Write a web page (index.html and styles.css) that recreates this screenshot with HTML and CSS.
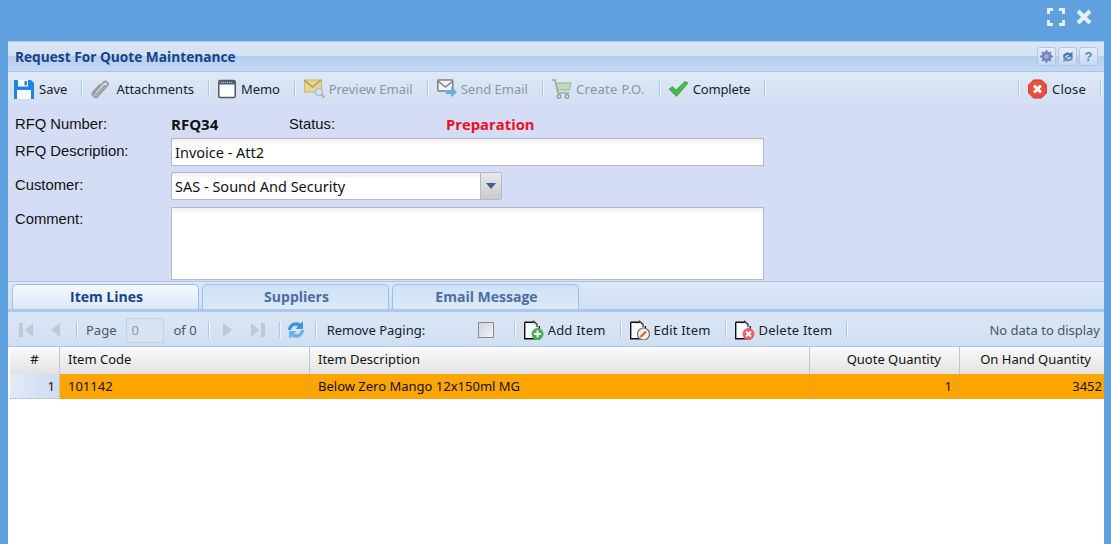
FILE: index.html
```html
<!DOCTYPE html>
<html lang="en">
<head>
  <meta charset="UTF-8" />
  <title>Request For Quote Maintenance</title>
  <link rel="stylesheet" href="styles.css">
</head>
<body>
  <!-- top bar -->
  <div class="topbar">
    <svg class="top-icon" width="18" height="18" viewBox="0 0 18 18"><path d="M1.500 6V1.500H6M12 1.500h4.500V6M16.500 12v4.500H12M6 16.500H1.500V12" fill="none" stroke="#e6f0fa" stroke-width="3"/></svg>
    <svg class="top-icon" width="16" height="16" viewBox="0 0 16 16"><path d="M2 2l12 12M14 2L2 14" fill="none" stroke="#e6f0fa" stroke-width="4"/></svg>
  </div>

  <div class="window">
    <div class="titlebar">
      <span class="title">Request For Quote Maintenance</span>
      <div class="tools">
        <div class="tool"><svg width="15" height="15" viewBox="0 0 15 15"><circle cx="7.500" cy="7.500" r="5" fill="#7686bd"/><circle cx="7.500" cy="7.500" r="2.200" fill="#9fb0dc"/><path d="M7.500 1v13M1 7.500h13M3 3l9 9M12 3l-9 9" stroke="#7686bd" stroke-width="1.800" stroke-dasharray="2.500 8 2.500"/></svg></div>
        <div class="tool"><svg width="14" height="14" viewBox="0 0 14 14"><path d="M2 7C2 3.500 6 1.500 9.500 3.200L11.500 1.500V7H6L8 5.200C6 4.500 4.500 5.200 4 7z" fill="#4d78ad"/><path d="M12 7c0 3.500-4 5.500-7.500 3.800L2.500 12.500V7H8L6 8.800C8 9.500 9.500 8.800 10 7z" fill="#6b90bf"/></svg></div>
        <div class="tool tool-help">?</div>
      </div>
    </div>

    <div class="toolbar">
      <div class="btn">
        <svg width="20" height="20" viewBox="0 0 20 20"><path d="M0 1h17l3 3v16H0z" fill="#1c86e0"/><rect x="4" y="1" width="10" height="6.500" fill="#fff"/><rect x="10.500" y="2" width="2.500" height="4.500" fill="#1c86e0"/><rect x="3" y="11" width="14" height="9" fill="#fff"/></svg>
        <span>Save</span>
      </div>
      <i class="sep"></i>
      <div class="btn gap-wide">
        <svg width="18" height="20" viewBox="0 0 18 20"><path d="M14.500 6L6 15c-1.500 1.500-3.500-.5-2-2.200l8.500-9.300c2.500-2.500 6 .8 3.500 3.500L7 17c-3 3-7.500-1-4.500-4.500L9 5.500" fill="none" stroke="#9a9a9a" stroke-width="1.800"/></svg>
        <span>Attachments</span>
      </div>
      <i class="sep"></i>
      <div class="btn">
        <svg width="18" height="20" viewBox="0 0 18 20"><rect x=".8" y="1.500" width="16.400" height="17" rx="1.500" fill="#fff" stroke="#55585e" stroke-width="1.500"/><rect x="1" y="2" width="16" height="3.500" fill="#4f6484"/><path d="M3 3.500h12" stroke="#b7c4d8" stroke-dasharray="1 1"/></svg>
        <span class="narrow">Memo</span>
      </div>
      <i class="sep"></i>
      <div class="btn off gap-tight">
        <svg width="22" height="20" viewBox="0 0 22 20"><rect x=".5" y="1" width="17" height="12" fill="#e8d68a" stroke="#c9b870"/><path d="M0 1l8.500 7L17 1" fill="none" stroke="#a89c70" stroke-width="1.500"/><circle cx="15" cy="13" r="3.500" fill="#d5e3f2" stroke="#a9bdd3" stroke-width="1.500"/><path d="M17.500 15.500l3 3" stroke="#c9a78c" stroke-width="2"/></svg>
        <span>Preview Email</span>
      </div>
      <i class="sep"></i>
      <div class="btn off gap-mid">
        <svg width="20" height="20" viewBox="0 0 20 20"><rect x=".8" y="1" width="15" height="11" rx="1" fill="#f1f4f8" stroke="#7c8085" stroke-width="1.500"/><path d="M1 2l7.500 6L16 2" fill="none" stroke="#7c8085" stroke-width="1.500"/><path d="M9 11h5V7.500l6 5.500-6 5.500V15H9z" fill="#6aaee8"/></svg>
        <span>Send Email</span>
      </div>
      <i class="sep"></i>
      <div class="btn off gap-mid">
        <svg width="20" height="20" viewBox="0 0 20 20"><path d="M0 1h3l3 13h11" fill="none" stroke="#9aa79a" stroke-width="1.500"/><path d="M4 4h15l-2 7H6z" fill="#bfdcc0" stroke="#8db890"/><circle cx="7" cy="17.500" r="1.800" fill="none" stroke="#8a968a" stroke-width="1.200"/><circle cx="15" cy="17.500" r="1.800" fill="none" stroke="#8a968a" stroke-width="1.200"/></svg>
        <span class="wider-more">Create P.O.</span>
      </div>
      <i class="sep"></i>
      <div class="btn">
        <svg width="19" height="20" viewBox="0 0 19 20"><path d="M0 10l3.500-2.500L7 11 16 2.500 19 4 7.500 17.500z" fill="#4cb84a" stroke="#3b9a3d" stroke-width=".8"/></svg>
        <span class="narrow">Complete</span>
      </div>
      <i class="sep"></i>
      <div class="spacer"></div>
      <i class="sep"></i>
      <div class="btn">
        <svg width="19" height="20" viewBox="0 0 19 20"><path d="M5.500 1h8L19 6.500v7L13.500 19h-8L0 13.500v-7z" fill="#e8503c" stroke="#c63a2a"/><path d="M6 6.500l7 7M13 6.500l-7 7" stroke="#fff" stroke-width="3"/></svg>
        <span class="wider">Close</span>
      </div>
      <i class="sep sep-end"></i>
    </div>

    <!-- form -->
    <div class="form">
      <div class="form-row row-head">
        <label>RFQ Number:</label>
        <div class="head-values">
          <b class="rfq-no">RFQ34</b>
          <span class="status-label">Status:</span>
          <b class="status">Preparation</b>
        </div>
      </div>
      <div class="form-row row-desc">
        <label>RFQ Description:</label>
        <div class="input input-wide">Invoice - Att2</div>
      </div>
      <div class="form-row">
        <label>Customer:</label>
        <div class="input input-combo">
          <span class="combo-text">SAS - Sound And Security</span>
          <div class="combo-arrow"><svg width="10" height="6" viewBox="0 0 10 6"><path d="M0 0h10L5 6z" fill="#41608f"/></svg></div>
        </div>
      </div>
      <div class="form-row">
        <label>Comment:</label>
        <div class="input input-wide input-memo"></div>
      </div>
    </div>

    <!-- tabs -->
    <div class="tabs">
      <div class="tab active">Item Lines</div>
      <div class="tab">Suppliers</div>
      <div class="tab">Email Message</div>
    </div>

    <div class="pager">
      <svg class="pg-first" width="14" height="16" viewBox="0 0 14 16"><rect x="0" y="1" width="4" height="14" fill="#bfc8d3"/><path d="M14 1v14L6 8z" fill="#bfc8d3"/></svg>
      <svg class="pg-prev" width="10" height="16" viewBox="0 0 10 16"><path d="M10 1v14L1 8z" fill="#bfc8d3"/></svg>
      <i class="sep sep-prev"></i>
      <span class="pg-text">Page</span>
      <div class="pg-input">0</div>
      <span class="pg-text">of 0</span>
      <i class="sep sep-of"></i>
      <svg class="pg-next" width="10" height="16" viewBox="0 0 10 16"><path d="M0 1v14l9-7z" fill="#bfc8d3"/></svg>
      <svg class="pg-last" width="14" height="16" viewBox="0 0 14 16"><rect x="10" y="1" width="4" height="14" fill="#bfc8d3"/><path d="M0 1v14l8-7z" fill="#bfc8d3"/></svg>
      <i class="sep"></i>
      <svg class="pg-refresh" width="18" height="20" viewBox="0 0 18 20"><path d="M1 10C1 4 8 0 13.500 3.500L16 1.500V9H8.500l2.500-2.500C8 4.500 4.500 6.500 4 10z" fill="#3e93dd"/><path d="M17 10c0 6-7 10-12.500 6.500L2 18.500V11h7.500L7 13.500c3 2 6.500 0 7-3.500z" fill="#6cb2ea"/></svg>
      <i class="sep sep-near"></i>
      <span class="remove-label">Remove Paging:</span>
      <div class="checkbox"></div>
      <i class="sep sep-far"></i>
      <div class="btn gap-mid">
        <svg width="20" height="20" viewBox="0 0 20 20"><path d="M.7 2.200h9M15.300 6v12.800H.7V2.200" fill="#fff" stroke="#111" stroke-width="1.400"/><path d="M9 .8l4 3.500v3" fill="none" stroke="#333" stroke-width="1.300"/><circle cx="13.500" cy="14" r="6" fill="#4cae56"/><path d="M13.500 10.500v7M10 14h7" stroke="#fff" stroke-width="2"/></svg>
        <span class="wider">Add Item</span>
      </div>
      <i class="sep"></i>
      <div class="btn gap-mid">
        <svg width="20" height="20" viewBox="0 0 20 20"><path d="M.7 2.200h9M15.300 6v12.800H.7V2.200" fill="#fff" stroke="#111" stroke-width="1.400"/><path d="M9 .8l4 3.500v3" fill="none" stroke="#333" stroke-width="1.300"/><circle cx="13.500" cy="14" r="6" fill="#f4f1ee" stroke="#77706a" stroke-width="1.200"/><path d="M10.500 17l5.500-5.500" stroke="#d9622b" stroke-width="2.200"/></svg>
        <span class="wider">Edit Item</span>
      </div>
      <i class="sep"></i>
      <div class="btn gap-mid">
        <svg width="20" height="20" viewBox="0 0 20 20"><path d="M.7 2.200h9M15.300 6v12.800H.7V2.200" fill="#fff" stroke="#111" stroke-width="1.400"/><path d="M9 .8l4 3.500v3" fill="none" stroke="#333" stroke-width="1.300"/><circle cx="13.500" cy="14" r="6" fill="#e8606a"/><path d="M11 11.500l5 5M16 11.500l-5 5" stroke="#fff" stroke-width="1.800"/></svg>
        <span class="wider">Delete Item</span>
      </div>
      <i class="sep"></i>
      <div class="spacer"></div>
      <span class="no-data">No data to display</span>
    </div>

    <!-- grid -->
    <div class="grid">
      <div class="head head-num">#</div>
      <div class="head">Item Code</div>
      <div class="head">Item Description</div>
      <div class="head head-right">Quote Quantity</div>
      <div class="head head-right last">On Hand Quantity</div>
      <div class="cell cell-num">1</div>
      <div class="cell">101142</div>
      <div class="cell">Below Zero Mango 12x150ml MG</div>
      <div class="cell cell-right">1</div>
      <div class="cell cell-right last">3452</div>
    </div>
  </div>
</body>
</html>
```

FILE: styles.css
```css
/* general */
html, body {
  height: 100%;
}
body {
  margin: 0;
  background: #5fa0de;
  font-family: "Noto Sans", sans-serif;
  font-size: 13px;
  color: #15212e;
  overflow: hidden;
  display: flex;
  flex-direction: column;
}
.topbar {
  height: 41px;
  flex: none;
  display: flex;
  justify-content: flex-end;
  align-items: center;
  gap: 11px;
  padding: 0 19px 7px 0;
  box-sizing: border-box;
}
.window {
  flex: 1;
  margin: 0 7px 0 8px;
  background: #fff;
  border-top: 1px solid #a9c8ee;
  display: flex;
  flex-direction: column;
  min-height: 0;
}

/* title */
.titlebar {
  height: 30px;
  flex: none;
  box-sizing: border-box;
  border-bottom: 1px solid #a6c4ec;
  background: linear-gradient(#d9e6f5 0, #d3e1f3 48%, #b5cfef 50%, #c4d8f2 100%);
  display: flex;
  align-items: center;
  padding: 0 6px 0 7px;
}
.title {
  font: bold 13.700px "Open Sans", sans-serif;
  color: #15428b;
  flex: 1;
}
.tools {
  display: flex;
  gap: 2px;
}
.tool {
  width: 17px;
  height: 17px;
  border: 1px solid #a9c8ee;
  border-radius: 3px;
  background: linear-gradient(#e6eff9, #c5d8f0);
  display: flex;
  align-items: center;
  justify-content: center;
}
.tool-help {
  font: bold 13px "Liberation Sans", sans-serif;
  color: #5d83b5;
}

/* toolbars */
.toolbar {
  height: 34px;
  flex: none;
  background: linear-gradient(#dfe9f6, #d6e2f3 60%, #d5ddf6);
  display: flex;
  align-items: center;
  padding-left: 6px;
  color: #15212e;
}
.btn {
  display: flex;
  align-items: center;
  gap: 5px;
  white-space: nowrap;
}
.gap-wide {
  gap: 7px;
}
.gap-mid {
  gap: 4px;
}
.gap-tight {
  gap: 3px;
}
.narrow {
  letter-spacing: -.15px;
}
.wider {
  letter-spacing: .2px;
}
.wider-more {
  letter-spacing: .3px;
}
.off {
  color: #8c95a0;
}
.sep {
  width: 1px;
  height: 16px;
  background: #a9c8ee;
  border-right: 1px solid #f0f6fd;
  margin: 0 8px 0 14px;
  flex: none;
}
.sep-end {
  margin-right: 2px;
}
.sep-near {
  margin-left: 10px;
}
.sep-far {
  margin-left: 20px;
}
.sep-of {
  margin-left: 11px;
}
.spacer {
  flex: 1;
}

/* form */
.form {
  height: 175px;
  flex: none;
  box-sizing: border-box;
  background: #d5ddf6;
  padding: 10px 0 0 7px;
  display: flex;
  flex-direction: column;
  gap: 7px;
}
.form-row {
  display: flex;
  font-family: "Liberation Sans", sans-serif;
  font-size: 14.800px;
}
.form-row label {
  width: 156px;
  flex: none;
  padding-top: 5px;
  line-height: 16px;
  color: #111;
}
.form-row:last-child label {
  padding-top: 4px;
}
.row-head {
  height: 16px;
  margin-bottom: -1px;
}
.row-head label {
  padding-top: 0;
}
.row-desc {
  margin-bottom: -1px;
}
.head-values {
  display: flex;
  line-height: 18px;
}
.rfq-no {
  width: 118px;
  font: bold 15px/17px "Open Sans", sans-serif;
  color: #111;
}
.status-label {
  width: 157px;
  line-height: 16px;
  color: #111;
}
.status {
  font: bold 14.800px/17px "Open Sans", sans-serif;
  color: #f00f1e;
}
.input {
  height: 28px;
  box-sizing: border-box;
  border: 1px solid #b4b9c6;
  background: linear-gradient(#f0f0f0, #fff 6px);
  padding-left: 3px;
  line-height: 26px;
  font-family: "Noto Sans", sans-serif;
  font-size: 14.500px;
  color: #111;
}
.input-wide {
  width: 593px;
}
.input-combo {
  width: 331px;
  display: flex;
  border-radius: 2px;
}
.combo-text {
  flex: 1;
}
.combo-arrow {
  width: 20px;
  background: linear-gradient(#e8e9ec, #c9cbd0);
  border-left: 1px solid #b4b9c6;
  display: flex;
  align-items: center;
  justify-content: center;
}
.input-memo {
  height: 73px;
}

/* tabs */
.tabs {
  height: 28px;
  flex: none;
  box-sizing: border-box;
  background: linear-gradient(#dde8f6, #cfdff2);
  border-top: 1px solid #a9c8ee;
  padding: 2px 0 0 4px;
  display: flex;
  gap: 3px;
}
.tab {
  width: 187px;
  box-sizing: border-box;
  border: 1px solid #9fc0ea;
  border-bottom: 0;
  border-radius: 5px 5px 0 0;
  background: linear-gradient(#cfe2f8, #dbe9fa);
  text-align: center;
  padding-left: 2px;
  font: bold 14px/24px "Open Sans", sans-serif;
  color: #4c6d9f;
}
.tab.active {
  background: linear-gradient(#f4f8fd, #dbe8f9);
  color: #15428b;
  height: 26px;
}

/* pager */
.pager {
  height: 38px;
  flex: none;
  box-sizing: border-box;
  border-top: 3px solid #a9c8ee;
  border-bottom: 1px solid #a9c8ee;
  background: linear-gradient(#dbe6f5, #d0e0f1);
  display: flex;
  align-items: center;
  padding: 2px 4px 0 11px;
  color: #15212e;
}
.pg-prev {
  margin-left: 17px;
}
.sep-prev {
  margin-left: 16px;
}
.pg-text {
  color: #4a5663;
}
.pg-input {
  width: 38px;
  height: 25px;
  box-sizing: border-box;
  margin: 0 10px 0 9px;
  border: 1px solid #c3d2e4;
  background: #d8e3f1;
  color: #8d98a6;
  padding-left: 5px;
  line-height: 23px;
}
.pg-next {
  margin-left: 5px;
}
.pg-last {
  margin-left: 18px;
}
.pg-refresh {
  margin-left: -2px;
}
.remove-label {
  width: 151px;
  margin-left: 2px;
}
.checkbox {
  width: 16px;
  height: 16px;
  box-sizing: border-box;
  border: 1px solid #8a8a8a;
  background: linear-gradient(135deg, #d0d3d8, #f4f5f7);
}
.no-data {
  color: #4a5663;
}

/* grid */
.grid {
  display: grid;
  grid-template-columns: 50px 250px 500px 150px 1fr;
  grid-template-rows: 27px 25px;
  padding-left: 2px;
  color: #111;
}
.head {
  box-sizing: border-box;
  background: linear-gradient(#fbfbfb, #e2e2e2);
  border-right: 1px solid #c5c5c5;
  padding-left: 8px;
  line-height: 24px;
}
.head-num {
  text-align: center;
  padding: 0;
}
.head-right {
  text-align: right;
  padding: 0 18px 0 0;
}
.head-right.last {
  padding-right: 13px;
}
.cell {
  box-sizing: border-box;
  background: #ffa500;
  padding-left: 8px;
  line-height: 25px;
  border-right: 1px dotted #c9a34e;
}
.cell-num {
  background: linear-gradient(90deg, #e2ebf7, #cddcf1);
  text-align: right;
  padding: 0 4px 0 0;
  border-bottom: 1px dotted #a8b3c2;
}
.cell-right {
  text-align: right;
  padding: 0 7px 0 0;
}
.last {
  border-right: 0;
}
.last.cell-right {
  padding-right: 2px;
}
```
